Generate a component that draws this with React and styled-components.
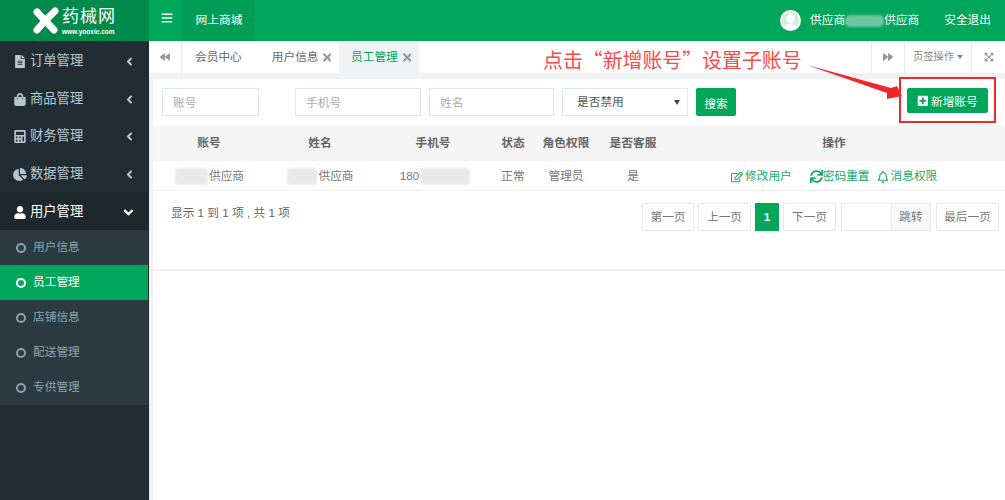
import React from "react";
import styled, { createGlobalStyle } from "styled-components";
import {
  FaAngleDown,
  FaAngleLeft,
  FaBackward,
  FaBars,
  FaCalculator,
  FaChartPie,
  FaExpandArrowsAlt,
  FaFileAlt,
  FaForward,
  FaPlusSquare,
  FaRegBell,
  FaRegEdit,
  FaShoppingBag,
  FaSync,
  FaTimes,
  FaUser,
} from "react-icons/fa";

const Green = "#00a65a";
const FontStack = '"Liberation Sans", "Noto Sans CJK SC", sans-serif';
const BaseSize = "11.7px";

const GlobalStyle = createGlobalStyle`
  html, body {
    margin: 0;
    padding: 0;
    background: #fff;
  }
  * {
    box-sizing: border-box;
  }
  #root {
    width: 1005px;
    height: 500px;
    overflow: hidden;
  }
`;

const Page = styled.div`
  position: relative;
  width: 1005px;
  height: 500px;
  overflow: hidden;
  font: ${BaseSize}/1.4 ${FontStack};
  color: #676a6c;
  display: grid;
  grid-template-columns: 149px 1fr;
  grid-template-rows: 41px 1fr;
`;

/* header */
const LogoBox = styled.div`
  background: #008a4b;
  display: flex;
  align-items: center;
  padding-left: 32px;
  gap: 2px;
`;

const LogoWords = styled.div`
  color: #fff;
  display: flex;
  flex-direction: column;
  margin-top: -1px;
`;

const LogoName = styled.span`
  font-size: 17px;
  line-height: 22px;
  letter-spacing: 1px;
`;

const LogoUrl = styled.span`
  font-size: 6.5px;
  line-height: 7px;
  font-weight: 700;
`;

const TopBar = styled.div`
  background: ${Green};
  display: flex;
  align-items: stretch;
  color: #fff;
`;

const MenuToggle = styled.div`
  width: 34px;
  display: flex;
  align-items: center;
  justify-content: center;
  font-size: 12px;
  padding: 0 0 6px 1px;
`;

const TopTab = styled.div`
  width: 72px;
  background: #009e55;
  display: flex;
  align-items: center;
  justify-content: center;
  font-size: 11.8px;
`;

const TopRight = styled.div`
  margin-left: auto;
  display: flex;
  align-items: center;
  padding-right: 14px;
`;

const AvatarIcon = styled.svg`
  margin-right: 9px;
`;

const BlurName = styled.span`
  display: inline-block;
  width: 39px;
  height: 12px;
  border-radius: 5px;
  background: #6cc79c;
  filter: blur(1px);
`;

const Logout = styled.span`
  margin-left: 25px;
`;

/* sidebar */
const Side = styled.nav`
  background: #222d33;
  border-right: 1px solid #1c262b;
`;

const MenuItem = styled.div`
  height: ${(p) => (p.$short ? "37px" : "38px")};
  display: flex;
  align-items: center;
  padding: 2px 12px 0 13px;
  font-size: 13.3px;
  color: ${(p) => (p.$open ? "#fff" : "#b8c7ce")};
  background: ${(p) => (p.$open ? "#1e282c" : "transparent")};

  svg:first-child {
    width: 14px;
    font-size: 13px;
    margin-right: 3px;
  }
  svg:last-child {
    margin-left: auto;
    font-size: ${(p) => (p.$open ? 15 : 13)}px;
  }
`;

const SubMenu = styled.div`
  background: #2c3b41;
`;

const SubItem = styled.div`
  height: 35px;
  display: flex;
  align-items: center;
  padding-left: 16px;
  gap: 7px;
  color: ${(p) => (p.$active ? "#fff" : "#8aa4af")};
  background: ${(p) => (p.$active ? Green : "transparent")};
`;

const Ring = styled.i`
  flex: none;
  width: 10px;
  height: 10px;
  border-radius: 50%;
  border: 2px solid ${(p) => (p.$active ? "#fff" : "#8aa4af")};
`;

/* tabs */
const Main = styled.main`
  background: #f0f3f4;
  padding-left: 4px;
  display: flex;
  flex-direction: column;
  min-width: 0;
`;

const TabBar = styled.div`
  height: 32px;
  margin-left: -4px;
  background: #fff;
  display: flex;
  align-items: stretch;
  flex: none;
`;

const TabTool = styled.div`
  width: ${(p) => p.$w}px;
  display: flex;
  align-items: center;
  justify-content: center;
  gap: 3px;
  color: #999;
  font-size: 10px;
  border-${(p) => p.$side || "left"}: 1px solid #e7eaec;
`;

const TabLabel = styled.span`
  font-size: 10.3px;
  color: #888;
`;

const Tab = styled.div`
  display: flex;
  align-items: center;
  gap: ${(p) => p.$gap || 5}px;
  padding: 1px ${(p) => p.$pad || 10}px 0 ${(p) => (p.$active ? 12 : 13)}px;
  color: ${(p) => (p.$active ? Green : "#676a6c")};
  background: ${(p) => (p.$active ? "#eff2f4" : "transparent")};

  svg {
    width: 8.5px;
    height: 13px;
    color: #999;
  }
`;

const TabList = styled.div`
  display: flex;
  flex: 1;
`;

/* list panel */
const Panel = styled.section`
  margin-top: 6px;
  background: #fff;
  flex: none;
`;

const Filters = styled.form`
  height: 46px;
  padding: 9px 17px 0 9px;
  display: flex;
  align-items: flex-start;
`;

const Field = styled.input`
  width: ${(p) => p.$w}px;
  height: 28px;
  margin-right: ${(p) => p.$gap}px;
  border: 1px solid #e1e5ee;
  padding: 0 10px;
  font: ${BaseSize} ${FontStack};
  outline: none;

  &::placeholder {
    color: #aaa;
  }
`;

const SelectBox = styled.div`
  width: 126px;
  height: 28px;
  margin-right: 8px;
  border: 1px solid #e1e5ee;
  padding: 0 14px;
  display: flex;
  align-items: center;
  justify-content: space-between;
  color: #555;

  &::after {
    content: "";
    margin-right: -7px;
    border: 3.5px solid transparent;
    border-top: 5px solid #444;
    border-bottom: 0;
  }
`;

const SearchButton = styled.button`
  width: 40px;
  height: 28px;
  border: 0;
  border-radius: 2px;
  padding: 0;
  background: ${Green};
  color: #fff;
  font: ${BaseSize} ${FontStack};
`;

const AddButton = styled.button`
  margin-left: auto;
  width: 81px;
  height: 25px;
  border: 0;
  border-radius: 2px;
  padding: 0;
  background: ${Green};
  color: #fff;
  font: ${BaseSize} ${FontStack};
  display: flex;
  align-items: center;
  justify-content: center;
  gap: 2px;
`;

const Row = styled.div`
  display: grid;
  grid-template-columns: 112px 110px 116px 44px 62px 72px 330px 1fr;
  align-items: center;
  height: ${(p) => (p.$head ? 36 : 30)}px;
  padding-top: ${(p) => (p.$head ? 1 : 2)}px;
  background: ${(p) => (p.$head ? "#f5f5f5" : "#fff")};
  font-weight: ${(p) => (p.$head ? 700 : 400)};
  border-bottom: ${(p) => (p.$head ? "0" : "1px solid #f0f0f0")};
  color: ${(p) => (p.$head ? "#666" : "#777")};
`;

const Cell = styled.div`
  display: flex;
  align-items: center;
  justify-content: center;
  white-space: nowrap;
  padding-left: ${(p) => p.$shift || 0}px;
`;

const Smudge = styled.span`
  display: inline-block;
  width: ${(p) => p.$w}px;
  height: 17px;
  border-radius: 4px;
  background: #e9e9e9;
  margin: 0 1px;
  filter: blur(1px);
`;

const Actions = styled.div`
  display: flex;
  padding-left: 62px;
  color: #1aa866;
`;

const ActionLink = styled.a`
  display: flex;
  align-items: center;
  gap: ${(p) => p.$gap}px;
  margin-right: ${(p) => p.$mr}px;
  white-space: nowrap;

  svg {
    font-size: ${(p) => p.$size}px;
  }
`;

const Footer = styled.div`
  height: 80px;
  padding: 13px 6px 0 18px;
  display: flex;
  justify-content: space-between;
  align-items: flex-start;
  border-bottom: 2px solid #f0f0f0;
`;

const Summary = styled.span`
  line-height: 18px;
  color: #666;
`;

const Pager = styled.div`
  display: flex;
  gap: 4px;
  margin-top: -1px;
`;

const PageButton = styled.div`
  height: 28px;
  width: ${(p) => p.$w}px;
  display: flex;
  align-items: center;
  justify-content: center;
  border: 1px solid ${(p) => (p.$active ? Green : "#e7e7e7")};
  border-radius: ${(p) => (p.$active ? 0 : 2)}px;
  background: ${(p) => (p.$active ? Green : "#fff")};
  color: ${(p) => (p.$active ? "#fff" : "#777")};
  font-weight: ${(p) => (p.$active ? 700 : 400)};
`;

const JumpGroup = styled.div`
  display: flex;
  margin: 0 1px;
`;

const JumpInput = styled.div`
  width: 50px;
  height: 28px;
  border: 1px solid #e7e7e7;
  border-right: 0;
`;

const JumpButton = styled.div`
  width: 40px;
  height: 28px;
  border: 1px solid #e7e7e7;
  background: #f8f8f8;
  display: flex;
  align-items: center;
  justify-content: center;
  color: #777;
`;

const Blank = styled.div`
  flex: 1;
  background: #fff;
`;

/* red notes drawn over the page */
const Note = styled.div`
  position: absolute;
  left: 543px;
  top: 46px;
  font: 19.9px/28px "Noto Sans CJK SC", sans-serif;
  color: #fa4a48;
  white-space: nowrap;
`;

const NoteArrow = styled.svg`
  position: absolute;
  left: 800px;
  top: 55px;
`;

const NoteBox = styled.div`
  position: absolute;
  left: 899px;
  top: 77px;
  width: 97px;
  height: 46px;
  border: 2px solid #f0262a;
`;

const menus = [
  { label: "订单管理", icon: <FaFileAlt /> },
  { label: "商品管理", icon: <FaShoppingBag /> },
  { label: "财务管理", icon: <FaCalculator />, short: true },
  { label: "数据管理", icon: <FaChartPie /> },
];

const subMenus = ["用户信息", "员工管理", "店铺信息", "配送管理", "专供管理"];

const LogoMark = () => (
  <svg width="28" height="28" viewBox="0 0 28 28">
    <g stroke="#fff" strokeWidth="7" strokeLinecap="round">
      <path d="M5 5 L22 23" />
      <path d="M23 4 L15 12" />
      <path d="M11 16 L5 23" />
    </g>
  </svg>
);

const UserAvatar = () => (
  <AvatarIcon width="21" height="21" viewBox="0 0 21 21">
    <circle cx="10.5" cy="10.5" r="10.5" fill="#fff" />
    <circle cx="10.5" cy="10.5" r="8.5" fill="#d3ebde" />
    <ellipse cx="10.5" cy="8.5" rx="4" ry="5" fill="#fff" />
    <path d="M4 17 Q10.5 10 17 17 Q10.5 22 4 17Z" fill="#fff" />
  </AvatarIcon>
);

export default function App() {
  return (
    <Page>
      <GlobalStyle />
      <LogoBox>
        <LogoMark />
        <LogoWords>
          <LogoName>药械网</LogoName>
          <LogoUrl>www.yooxie.com</LogoUrl>
        </LogoWords>
      </LogoBox>
      <TopBar>
        <MenuToggle>
          <FaBars />
        </MenuToggle>
        <TopTab>网上商城</TopTab>
        <TopRight>
          <UserAvatar />
          供应商
          <BlurName />
          供应商
          <Logout>安全退出</Logout>
        </TopRight>
      </TopBar>

      <Side>
        {menus.map((m) => (
          <MenuItem key={m.label} $short={m.short}>
            {m.icon}
            {m.label}
            <FaAngleLeft />
          </MenuItem>
        ))}
        <MenuItem $open>
          <FaUser />
          用户管理
          <FaAngleDown />
        </MenuItem>
        <SubMenu>
          {subMenus.map((s) => (
            <SubItem key={s} $active={s === "员工管理"}>
              <Ring $active={s === "员工管理"} />
              {s}
            </SubItem>
          ))}
        </SubMenu>
      </Side>

      <Main>
        <TabBar>
          <TabTool $w={33} $side="right">
            <FaBackward />
          </TabTool>
          <TabList>
            <Tab $pad={17}>会员中心</Tab>
            <Tab $pad={8} $gap={4}>
              用户信息
              <FaTimes />
            </Tab>
            <Tab $active $pad={8}>
              员工管理
              <FaTimes />
            </Tab>
          </TabList>
          <TabTool $w={33}>
            <FaForward />
          </TabTool>
          <TabTool $w={67}>
            <TabLabel>页签操作</TabLabel>
            <svg width="6" height="4" viewBox="0 0 6 4">
              <path d="M0 0H6L3 4Z" fill="#888" />
            </svg>
          </TabTool>
          <TabTool $w={34}>
            <FaExpandArrowsAlt />
          </TabTool>
        </TabBar>

        <Panel>
          <Filters>
            <Field $w={97} $gap={36} placeholder="账号" />
            <Field $w={126} $gap={8} placeholder="手机号" />
            <Field $w={125} $gap={8} placeholder="姓名" />
            <SelectBox>是否禁用</SelectBox>
            <SearchButton type="button">搜索</SearchButton>
            <AddButton type="button">
              <FaPlusSquare />
              新增账号
            </AddButton>
          </Filters>

          <Row $head>
            <Cell>账号</Cell>
            <Cell>姓名</Cell>
            <Cell>手机号</Cell>
            <Cell>状态</Cell>
            <Cell>角色权限</Cell>
            <Cell>是否客服</Cell>
            <Cell>操作</Cell>
          </Row>
          <Row>
            <Cell>
              <Smudge $w={33} />
              供应商
            </Cell>
            <Cell>
              <Smudge $w={30} />
              供应商
            </Cell>
            <Cell $shift={5}>
              180
              <Smudge $w={50} />
            </Cell>
            <Cell>正常</Cell>
            <Cell>管理员</Cell>
            <Cell>是</Cell>
            <Actions>
              <ActionLink $mr={18} $gap={2} $size={12}>
                <FaRegEdit />
                修改用户
              </ActionLink>
              <ActionLink $mr={7} $gap={0} $size={13}>
                <FaSync />
                密码重置
              </ActionLink>
              <ActionLink $mr={0} $gap={2} $size={12}>
                <FaRegBell />
                消息权限
              </ActionLink>
            </Actions>
          </Row>

          <Footer>
            <Summary>显示 1 到 1 项 , 共 1 项</Summary>
            <Pager>
              <PageButton $w={52}>第一页</PageButton>
              <PageButton $w={53}>上一页</PageButton>
              <PageButton $w={24} $active>
                1
              </PageButton>
              <PageButton $w={53}>下一页</PageButton>
              <JumpGroup>
                <JumpInput />
                <JumpButton>跳转</JumpButton>
              </JumpGroup>
              <PageButton $w={63}>最后一页</PageButton>
            </Pager>
          </Footer>
        </Panel>
        <Blank />
      </Main>

      <Note>点击“新增账号”设置子账号</Note>
      <NoteArrow width="110" height="50" viewBox="0 0 110 50">
        <path d="M7 10 L91 33 L97 31 L102 41 L87 44 L87 38 Z" fill="#f0262a" />
      </NoteArrow>
      <NoteBox />
    </Page>
  );
}
